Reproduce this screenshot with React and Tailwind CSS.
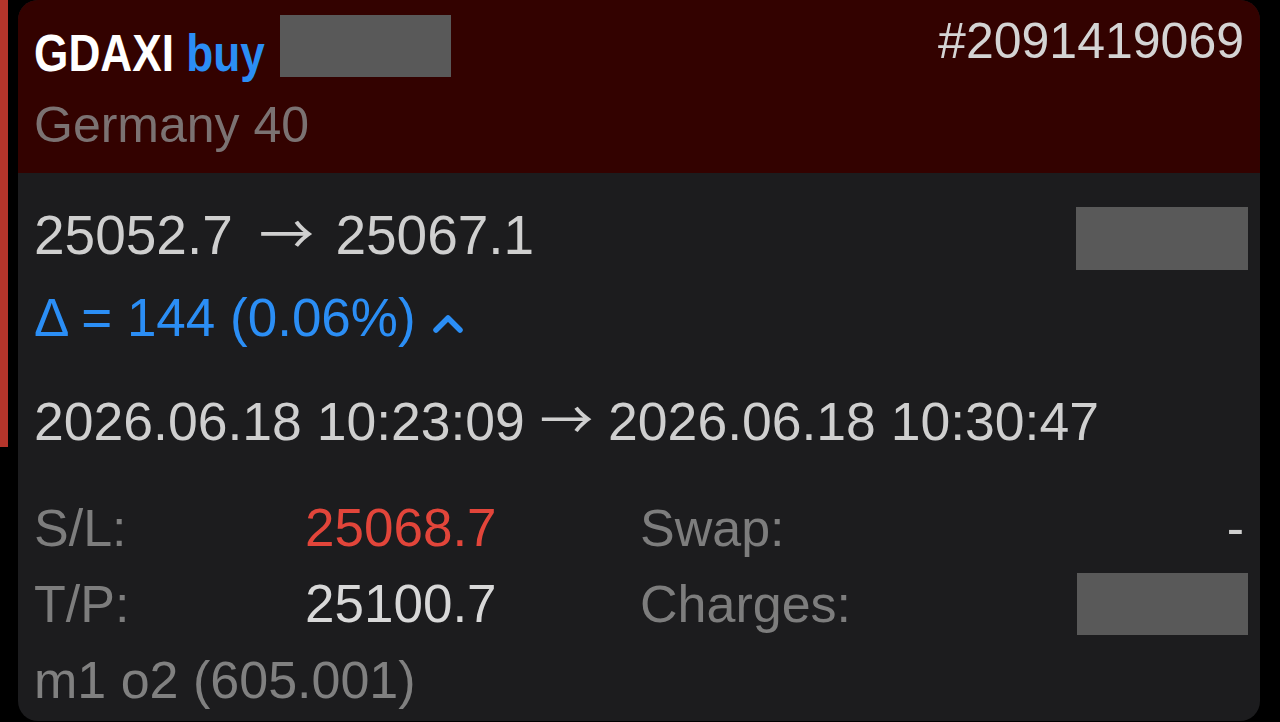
const sans = { fontFamily: '"Liberation Sans", Arial, sans-serif' };
const arrowFont = { fontFamily: '"Noto Sans CJK JP", "DejaVu Sans", sans-serif' };

function Redacted({ className }) {
  return <div className={`bg-[#595959] shrink-0 ${className}`} />;
}

function Arrow({ className = "" }) {
  return <span className={`leading-[0px] ${className}`} style={arrowFont}>→</span>;
}

export default function App() {
  return (
    <div className="min-h-screen bg-black flex items-start overflow-hidden" style={sans}>
      {/* edge of the previous card */}
      <div className="w-[8px] h-[447px] bg-[#b5352b] shrink-0" />

      <div className="ml-[10px] w-[1242px] h-[721px] rounded-[20px] overflow-hidden bg-[#1c1c1e] flex flex-col shrink-0">
        {/* Header */}
        <div className="h-[173px] bg-[#330200] px-[16px] flex justify-between shrink-0">
          <div className="flex flex-col">
            <div className="flex items-start">
              <div className="w-[234px] mt-[28px] text-[52px] leading-[50px] font-bold text-white whitespace-nowrap">
                <span className="inline-block origin-left scale-x-[0.85]">
                  GDAXI <span className="text-[#2b8ef5]">buy</span>
                </span>
              </div>
              <Redacted className="ml-[12px] mt-[15px] w-[171px] h-[62px]" />
            </div>
            <div className="mt-[22px] text-[50px] leading-[50px] text-[#7b7272]">Germany 40</div>
          </div>
          <div className="mt-[16px] text-[50px] leading-[50px] text-[#d4d4d4]">#2091419069</div>
        </div>

        {/* Body */}
        <div className="px-[16px] pt-[30px] text-[#cfcfcf]">
          <div className="flex justify-between items-start">
            <div className="text-[55px] leading-[64px] whitespace-nowrap">
              25052.7 <Arrow className="ml-[11px] mr-[6px]" /> 25067.1
            </div>
            <Redacted className="mt-[4px] -mr-[4px] w-[172px] h-[63px]" />
          </div>

          <div className="mt-[16px] flex items-start text-[#2b8ef5]">
            <div className="text-[53px] leading-[64px]">Δ = 144 (0.06%)</div>
            <svg className="ml-[16px] mt-[26px]" width="32" height="24" viewBox="0 0 32 24" fill="none">
              <polyline points="4,18 16,6 28,18" stroke="#2b8ef5" strokeWidth="5.5" strokeLinecap="round" strokeLinejoin="round" />
            </svg>
          </div>

          <div className="mt-[40px] text-[53.5px] leading-[64px] whitespace-nowrap">
            2026.06.18 10:23:09 <Arrow /> 2026.06.18 10:30:47
          </div>

          <div className="mt-[36px] grid grid-cols-[271px_335px_1fr_auto] items-center text-[52px] leading-[76px]">
            <div className="text-[#7d7d7d]">S/L:</div>
            <div className="text-[53px] text-[#e2453a]">25068.7</div>
            <div className="text-[#7d7d7d]">Swap:</div>
            <div className="text-right">-</div>

            <div className="text-[#7d7d7d]">T/P:</div>
            <div className="text-[53px] text-[#d8d8d8]">25100.7</div>
            <div className="text-[#7d7d7d]">Charges:</div>
            <div className="flex justify-end">
              <Redacted className="-mr-[4px] w-[171px] h-[62px]" />
            </div>

            <div className="col-span-4 text-[#808080]">m1 o2 (605.001)</div>
          </div>
        </div>
      </div>
    </div>
  );
}
